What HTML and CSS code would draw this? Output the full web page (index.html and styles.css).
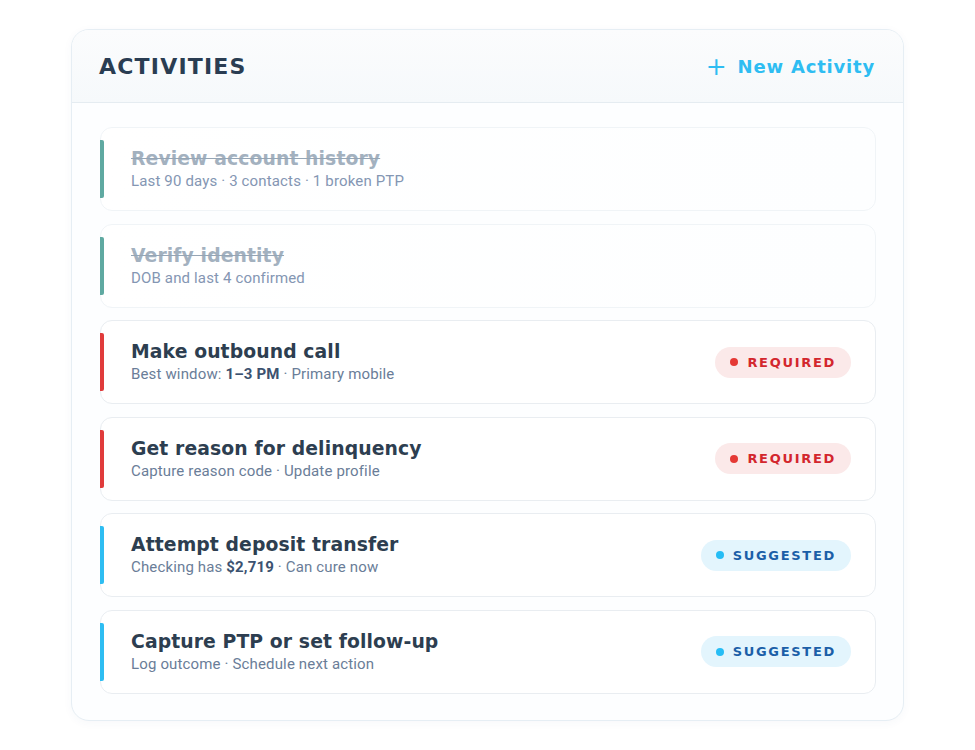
FILE: index.html
```html
<!DOCTYPE html>
<html lang="en">
<head>
  <meta charset="UTF-8">
  <title>Activities</title>
  <meta name="viewport" content="width=device-width, initial-scale=1.0"/>
  <link rel="stylesheet" href="styles.css">
</head>
<body>
  <div class="panel">
    <div class="panel-head">
      <h1>ACTIVITIES</h1>
      <a class="new-btn" href="#"><span class="plus">+</span> New Activity</a>
    </div>
    <div class="list">
      <div class="item done">
        <div class="text">
          <div class="title">Review account history</div>
          <div class="sub">Last 90 days · 3 contacts · 1 broken PTP</div>
        </div>
      </div>
      <div class="item done">
        <div class="text">
          <div class="title">Verify identity</div>
          <div class="sub">DOB and last 4 confirmed</div>
        </div>
      </div>
      <div class="item required">
        <div class="text">
          <div class="title">Make outbound call</div>
          <div class="sub">Best window: <b>1–3 PM</b> · Primary mobile</div>
        </div>
        <span class="badge req"><i></i>REQUIRED</span>
      </div>
      <div class="item required">
        <div class="text">
          <div class="title">Get reason for delinquency</div>
          <div class="sub">Capture reason code · Update profile</div>
        </div>
        <span class="badge req"><i></i>REQUIRED</span>
      </div>
      <div class="item suggested">
        <div class="text">
          <div class="title">Attempt deposit transfer</div>
          <div class="sub">Checking has <b>$2,719</b> · Can cure now</div>
        </div>
        <span class="badge sug"><i></i>SUGGESTED</span>
      </div>
      <div class="item suggested">
        <div class="text">
          <div class="title">Capture PTP or set follow-up</div>
          <div class="sub">Log outcome · Schedule next action</div>
        </div>
        <span class="badge sug"><i></i>SUGGESTED</span>
      </div>
    </div>
  </div>
</body>
</html>
```
FILE: styles.css
```css
body { margin: 0; padding: 29px 71px 30px 71px; background: #fff; font-family: "DejaVu Sans", sans-serif; color: #2d3e50; }

.panel { background: #fdfeff; border: 1px solid #e6eef4; border-radius: 18px; box-shadow: 0 2px 10px rgba(40,80,120,0.04); overflow: hidden; }
.panel-head { display: flex; align-items: center; justify-content: space-between; height: 72px; padding: 0 28px 0 27px; background: linear-gradient(#fbfcfd, #f6f9fb); border-bottom: 1px solid #e5ecf1; }
h1 { margin: 0; font-size: 22px; font-weight: bold; letter-spacing: 1.2px; color: #2a3d52; }
.new-btn { color: #2ebdf2; text-decoration: none; font-size: 18px; font-weight: bold; letter-spacing: 0.8px; display: flex; align-items: center; }
.plus { font-weight: normal; font-size: 25px; margin-right: 10px; line-height: 1; }

.list { display: flex; flex-direction: column; gap: 12.5px; padding: 24px 27px 26px 28px; }
.item { position: relative; display: flex; align-items: center; justify-content: space-between; height: 84px; padding: 0 24px 0 30px; background: #fff; border: 1px solid #e9edf1; border-radius: 12px; box-sizing: border-box; }
.item::before { content: ""; position: absolute; left: -1px; top: 12px; bottom: 12px; width: 4px; border-radius: 0 2px 2px 0; }
.item.done { background: linear-gradient(90deg, #fff, #fdfeff); border-color: #f0f4f7; }
.item.done::before { background: #5fa9a1; }
.item.required::before { background: #e03b3b; }
.item.suggested::before { background: #2ebdf2; }

.title { font-size: 18.8px; font-weight: bold; letter-spacing: 0.1px; color: #2d3e50; margin-bottom: 3px; }
.sub { font-family: Roboto, sans-serif; font-size: 15px; letter-spacing: 0.15px; color: #6a7d98; }
.sub b { font-weight: bold; color: #3c5270; }
.done .title { color: #a3b1bf; text-decoration: line-through; text-decoration-color: #95a5b5; }
.done .sub { color: #8496b3; }

.badge { display: flex; align-items: center; height: 31px; padding: 0 15px; border-radius: 16px; font-size: 13px; font-weight: bold; letter-spacing: 1.7px; }
.badge i { width: 8px; height: 8px; border-radius: 50%; margin-right: 9px; }
.badge.req { background: #fbe9e9; color: #d3262d; }
.badge.req i { background: #e53935; }
.badge.sug { background: #e3f5fd; color: #1b5fa8; }
.badge.sug i { background: #26bdf5; }
```
